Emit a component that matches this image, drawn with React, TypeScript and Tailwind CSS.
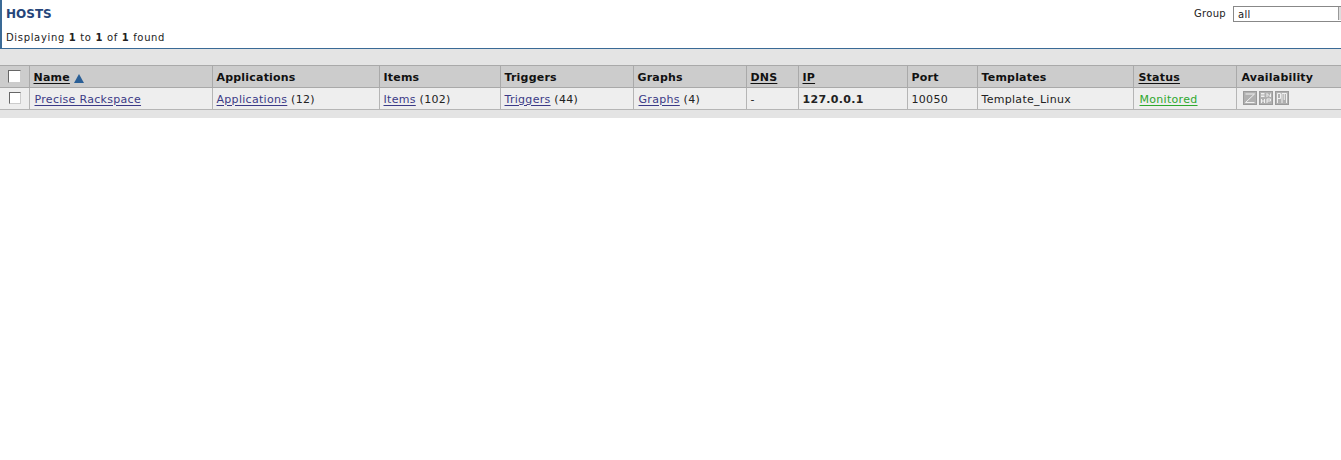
const font = "font-['DejaVu_Sans',Verdana,sans-serif]";

const columns = [
  { name: "", width: 29 },
  { name: "Name", width: 183, sorted: true, sortable: true },
  { name: "Applications", width: 167 },
  { name: "Items", width: 121 },
  { name: "Triggers", width: 133 },
  { name: "Graphs", width: 113 },
  { name: "DNS", width: 52, sortable: true },
  { name: "IP", width: 109, sortable: true },
  { name: "Port", width: 70 },
  { name: "Templates", width: 156 },
  { name: "Status", width: 103, sortable: true, shifted: true },
  { name: "Availability", width: 105, shifted: true },
];

function Check({ className }: { className: string }) {
  return (
    <span className={`block bg-white border border-[#666] border-r-[#ccc] border-b-[#ccc] ${className}`} />
  );
}

function AvailIcon({ children }: { children: React.ReactNode }) {
  return (
    <span className="block w-[14px] h-[14px] bg-[#b0b0b0] border border-[#9a9a9a]">
      <svg viewBox="0 0 12 12" className="block w-full h-full" fill="none" stroke="#f0f0f0" strokeWidth="1">
        {children}
      </svg>
    </span>
  );
}

function LinkCount({ label, count }: { label: string; count: string }) {
  return (
    <>
      <a className="text-[#3b3a86] underline underline-offset-2">{label}</a>
      <span> ({count})</span>
    </>
  );
}

export default function App() {
  return (
    <div className={`${font} w-[1341px] h-[460px] bg-white text-[11px] text-[#222] overflow-hidden`}>
      <div className="h-[49px] border-l-2 border-b border-[#3a6a96] pl-1 flex justify-between">
        <div className="flex flex-col">
          <h1 className="mt-[6px] h-4 text-xs leading-4 font-bold text-[#25457a]">HOSTS</h1>
          <p className="mt-[10px] text-[10px] tracking-[0.66px] leading-3">
            Displaying <b>1</b> to <b>1</b> of <b>1</b> found
          </p>
        </div>
        <div className="flex items-start pt-[6px]">
          <span className="text-[10px] tracking-[0.3px] leading-4 mr-[7px]">Group</span>
          <div className="w-[108px] h-4 border border-[#888] border-r-0 flex justify-between pl-1 leading-[15px] text-[10px] tracking-[0.3px]">
            all
            <span className="w-[3px] h-[13px] bg-[#ddd] border-l border-[#999]" />
          </div>
        </div>
      </div>

      <div className="h-[16px] bg-[#e4e4e4]" />

      <table className="table-fixed border-collapse w-[1341px] tracking-[0.2px]">
        <colgroup>
          {columns.map((c, i) => (
            <col key={i} style={{ width: c.width }} />
          ))}
        </colgroup>
        <thead>
          <tr className="h-[22px] bg-[#cccccc] border-y border-[#a9a9a9]">
            {columns.map((c, i) => (
              <th
                key={i}
                className={`border-r last:border-r-0 border-[#a9a9a9] ${c.shifted ? "pl-[5px]" : "pl-1"} pt-[3px] pb-0 pr-0 text-left font-bold text-[11px] text-[#111]`}
              >
                {i === 0 ? (
                  <Check className="w-[13px] h-[13px] ml-[4px] -mt-[4px]" />
                ) : (
                  <span className="flex items-center gap-1">
                    <span className={c.sortable ? "underline underline-offset-2" : ""}>{c.name}</span>
                    {c.sorted && (
                      <svg width="10" height="9" viewBox="0 0 10 9">
                        <path d="M5 0 L10 9 L0 9 Z" fill="#2a5f96" />
                      </svg>
                    )}
                  </span>
                )}
              </th>
            ))}
          </tr>
        </thead>
        <tbody>
          <tr className="h-[22px] bg-[#eeeeee] border-b border-[#b5b5b5] [&>td]:border-r [&>td]:border-[#b5b5b5] [&>td]:pl-1 [&>td]:pt-[3px] [&>td]:pb-0 [&>td]:pr-0 [&>td:last-child]:border-r-0 tracking-[0.3px]">
            <td>
              <Check className="w-3 h-3 ml-[5px] -mt-[4px]" />
            </td>
            <td>
              <a className="text-[#3b3a86] underline underline-offset-2 ml-px">Precise Rackspace</a>
            </td>
            <td>
              <LinkCount label="Applications" count="12" />
            </td>
            <td>
              <LinkCount label="Items" count="102" />
            </td>
            <td>
              <LinkCount label="Triggers" count="44" />
            </td>
            <td>
              <span className="ml-px">
                <LinkCount label="Graphs" count="4" />
              </span>
            </td>
            <td>-</td>
            <td className="font-bold">127.0.0.1</td>
            <td>10050</td>
            <td>Template_Linux</td>
            <td>
              <a className="text-[#2ea82e] underline underline-offset-2 ml-[2px]">Monitored</a>
            </td>
            <td>
              <span className="flex gap-[2px] ml-[2px] -mt-[4px]">
                <AvailIcon>
                  <path d="M1.5 2 H10.5 L1.5 10.5 H10.5" />
                </AvailIcon>
                <AvailIcon>
                  <path d="M1 1.5 H4.5 M1 3 H4.5 M1 4.5 H4.5 M7 5 V1.5 L10.5 5 V1.5 M1.5 11 V7 M4.5 11 V7 M1.5 9 H4.5 M7 11 V7 H10.5 V9 H7" />
                </AvailIcon>
                <AvailIcon>
                  <path d="M1.5 11 V1.5 H4.5 V6.5 H1.5 M6 11 V1.5 M8.25 1.5 V8 M10.5 11 V1.5 M6 1.5 H10.5" />
                </AvailIcon>
              </span>
            </td>
          </tr>
        </tbody>
      </table>

      <div className="h-[8px] bg-[#e4e4e4]" />
    </div>
  );
}
